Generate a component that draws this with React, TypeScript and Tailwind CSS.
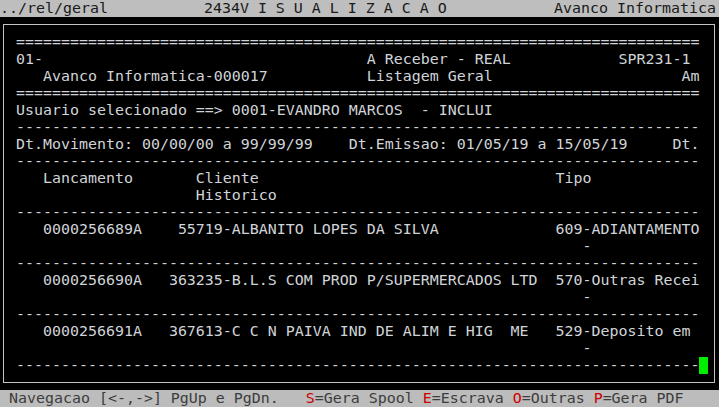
const eq = "=".repeat(76);
const dash = "-".repeat(76);

const rows = [
  eq,
  "01-" + " ".repeat(36) + "A Receber - REAL" + " ".repeat(12) + "SPR231-1",
  "   Avanco Informatica-000017" + " ".repeat(11) + "Listagem Geral" + " ".repeat(21) + "Am",
  eq,
  "Usuario selecionado ==> 0001-EVANDRO MARCOS  - INCLUI",
  dash,
  "Dt.Movimento: 00/00/00 a 99/99/99    Dt.Emissao: 01/05/19 a 15/05/19     Dt.",
  dash,
  "   Lancamento" + " ".repeat(7) + "Cliente" + " ".repeat(33) + "Tipo",
  " ".repeat(20) + "Historico",
  dash,
  "   0000256689A    55719-ALBANITO LOPES DA SILVA" + " ".repeat(13) + "609-ADIANTAMENTO",
  " ".repeat(63) + "-",
  dash,
  "   0000256690A   363235-B.L.S COM PROD P/SUPERMERCADOS LTD  570-Outras Recei",
  " ".repeat(63) + "-",
  dash,
  "   0000256691A   367613-C C N PAIVA IND DE ALIM E HIG  ME   529-Deposito em",
  " ".repeat(63) + "-",
];

const hotkeys = [
  { key: "S", label: "=Gera Spool" },
  { key: "E", label: "=Escrava" },
  { key: "O", label: "=Outras" },
  { key: "P", label: "=Gera PDF" },
];

export default function App() {
  return (
    <div className="w-[719px] h-[407px] overflow-hidden bg-black flex flex-col font-['DejaVu_Sans_Mono',monospace] text-[14.95px] leading-[17px]">
      {/* title bar */}
      <div className="h-[17px] shrink-0 bg-[#bebebe] text-[#1a1a1a] whitespace-pre flex pl-[0px] pr-[3px]">
        <span>{"../rel/geral"}</span>
        <span className="ml-[96px]">2434V I S U A L I Z A C A O</span>
        <span className="ml-auto">Avanco Informatica</span>
      </div>

      {/* report area */}
      <div className="flex-1">
        <div className="mt-[7px] ml-[3px] w-[712px] h-[359px] border border-[#c4c4c4] pt-[9px] pl-[12px] text-[#d0d4d8]">
          {rows.map((r, i) => (
            <div key={i} className="h-[17px] whitespace-pre">
              {r}
            </div>
          ))}
          <div className="h-[17px] whitespace-pre flex">
            <span>{dash}</span>
            <span className="inline-block w-[9px] h-[17px] bg-[#00ee00]" />
          </div>
        </div>
      </div>

      {/* status bar */}
      <div className="h-[17px] shrink-0 bg-[#bcbcbc] text-[#3c3c3c] whitespace-pre">
        {" Navegacao [<-,->] PgUp e PgDn.   "}
        {hotkeys.map((h, i) => (
          <span key={h.key}>
            {i > 0 ? " " : ""}
            <span className="text-[#cc0000]">{h.key}</span>
            {h.label}
          </span>
        ))}
      </div>
    </div>
  );
}
